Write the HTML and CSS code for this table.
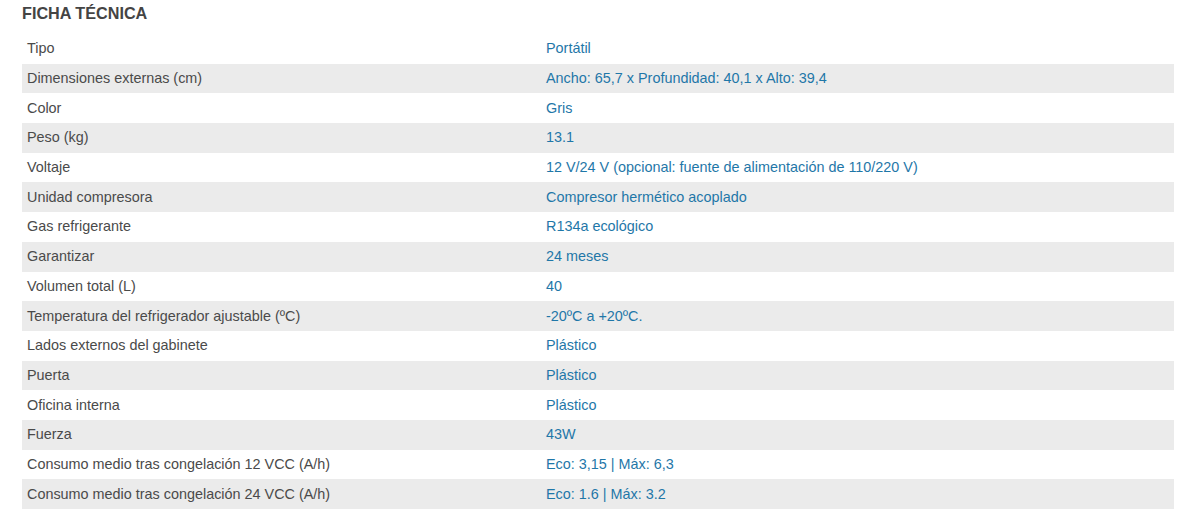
FILE: index.html
```html
<!DOCTYPE html>
<html lang="es">
<head>
<meta charset="utf-8">
<link rel="stylesheet" href="styles.css">
</head>
<body>
<section class="spec">
  <h2 class="spec-title">FICHA TÉCNICA</h2>
  <table class="spec-table">
    <tbody>
      <tr><td class="k">Tipo</td><td class="v">Portátil</td></tr>
      <tr><td class="k">Dimensiones externas (cm)</td><td class="v">Ancho: 65,7 x Profundidad: 40,1 x Alto: 39,4</td></tr>
      <tr><td class="k">Color</td><td class="v">Gris</td></tr>
      <tr><td class="k">Peso (kg)</td><td class="v">13.1</td></tr>
      <tr><td class="k">Voltaje</td><td class="v">12 V/24 V (opcional: fuente de alimentación de 110/220 V)</td></tr>
      <tr><td class="k">Unidad compresora</td><td class="v">Compresor hermético acoplado</td></tr>
      <tr><td class="k">Gas refrigerante</td><td class="v">R134a ecológico</td></tr>
      <tr><td class="k">Garantizar</td><td class="v">24 meses</td></tr>
      <tr><td class="k">Volumen total (L)</td><td class="v">40</td></tr>
      <tr><td class="k">Temperatura del refrigerador ajustable (ºC)</td><td class="v">-20ºC a +20ºC.</td></tr>
      <tr><td class="k">Lados externos del gabinete</td><td class="v">Plástico</td></tr>
      <tr><td class="k">Puerta</td><td class="v">Plástico</td></tr>
      <tr><td class="k">Oficina interna</td><td class="v">Plástico</td></tr>
      <tr><td class="k">Fuerza</td><td class="v">43W</td></tr>
      <tr><td class="k">Consumo medio tras congelación 12 VCC (A/h)</td><td class="v">Eco: 3,15 | Máx: 6,3</td></tr>
      <tr><td class="k">Consumo medio tras congelación 24 VCC (A/h)</td><td class="v">Eco: 1.6 | Máx: 3.2</td></tr>
    </tbody>
  </table>
</section>
</body>
</html>
```

FILE: styles.css
```css
html, body {
  margin: 0;
  padding: 0;
  background: #fff;
}
body {
  font-family: "Liberation Sans", Arial, sans-serif;
}
.spec {
  padding: 0 10px 0 22px;
}
.spec-title {
  margin: 0;
  padding-top: 4px;
  height: 34px;
  box-sizing: border-box;
  font-size: 16.2px;
  line-height: 19px;
  font-weight: bold;
  color: #444;
}
.spec-table {
  width: 100%;
  border-collapse: collapse;
  border-spacing: 0;
  font-size: 14.4px;
}
.spec-table tr {
  height: 29.7px;
}
.spec-table tr:nth-child(even) {
  background: #ebebeb;
}
.spec-table td {
  padding: 0 5px;
  vertical-align: middle;
  line-height: 17px;
}
.spec-table .k {
  width: 509px;
  color: #4a4a4a;
}
.spec-table .v {
  color: #1f77a8;
}
```
